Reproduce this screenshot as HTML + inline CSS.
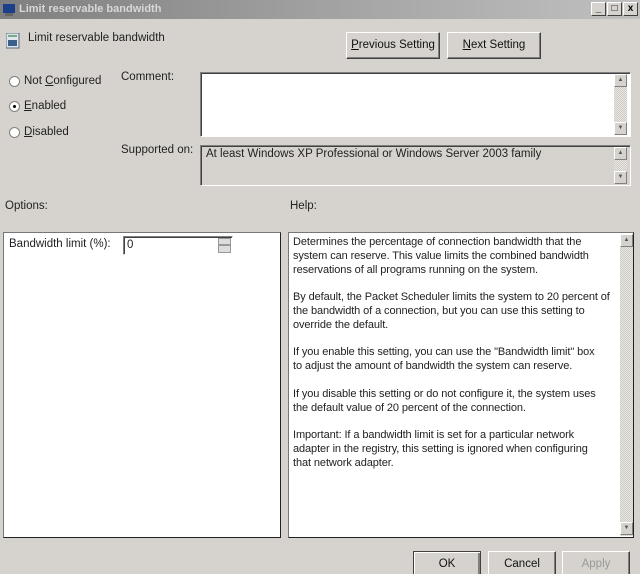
<!DOCTYPE html>
<html><head><meta charset="utf-8"><style>
*{box-sizing:border-box;margin:0;padding:0}
html,body{width:640px;height:574px;overflow:hidden}
body{background:#d6d3ce;font-family:"Liberation Sans",sans-serif;font-size:11px;color:#222;position:relative}
.a{position:absolute}
.title{left:0;top:0;width:640px;height:19px;background:linear-gradient(90deg,#7f7f7f,#a8a8a8 60%,#c0c0c0);}
.title span{position:absolute;left:19px;top:3px;color:#d8d8d8;font-weight:bold;font-size:11px}
.tb{top:2px;width:15px;height:14px;background:#d6d3ce;border:1px solid;border-color:#fff #404040 #404040 #fff;font-size:10px;line-height:11px;text-align:center;font-weight:bold;color:#000}
.btn{background:#d6d3ce;border:1px solid;border-color:#fff #404040 #404040 #fff;box-shadow:inset -1px -1px #808080;text-align:center;font-size:11.5px;line-height:24px;color:#111}
.sunk{border:1px solid;border-color:#808080 #fff #fff #808080;box-shadow:inset 1px 1px #404040}
.panel{border:1px solid #222;border-top-color:#777;border-left-color:#777;background:#fff}
.radio{width:11px;height:11px;border-radius:50%;background:#fff;border:1px solid #808080}
.lbl{font-size:11.5px}
.sb{width:13px;background:repeating-conic-gradient(#e8e6e2 0 25%,#cfccc6 0 50%) 0 0/2px 2px}
.arr{width:13px;height:13px;background:#d6d3ce;border:1px solid;border-color:#fff #808080 #808080 #fff;font-size:6px;line-height:11px;text-align:center;color:#555}
.help p{margin-bottom:13.8px;white-space:nowrap}
</style></head><body>
<div class="a title"><svg class="a" style="left:2px;top:2px" width="15" height="15"><rect x="1" y="2" width="12" height="9" fill="#1c3f8c"/><rect x="3" y="11" width="8" height="3" fill="#666"/></svg><span>Limit reservable bandwidth</span></div>
<div class="a tb" style="left:591px">_</div><div class="a tb" style="left:607px">□</div><div class="a tb" style="left:623px">x</div>

<svg class="a" style="left:6px;top:33px" width="14" height="16"><rect x="0" y="0" width="13" height="15" fill="#dfe6ee" stroke="#567"/><rect x="2" y="7" width="9" height="6" fill="#3a5f8a"/><rect x="2" y="2" width="9" height="2" fill="#7a8"/></svg>
<div class="a lbl" style="left:28px;top:32px">Limit reservable bandwidth</div>
<div class="a btn" style="left:346px;top:32px;width:94px;height:27px"><u>P</u>revious Setting</div>
<div class="a btn" style="left:447px;top:32px;width:94px;height:27px"><u>N</u>ext Setting</div>

<div class="a radio" style="left:9px;top:76px"></div><div class="a lbl" style="left:24px;top:75px">Not <u>C</u>onfigured</div>
<div class="a radio" style="left:9px;top:101px"><div class="a" style="left:3px;top:3px;width:3px;height:3px;background:#000;border-radius:50%"></div></div><div class="a lbl" style="left:24px;top:100px"><u>E</u>nabled</div>
<div class="a radio" style="left:9px;top:127px"></div><div class="a lbl" style="left:24px;top:126px"><u>D</u>isabled</div>

<div class="a lbl" style="left:121px;top:71px">Comment:</div>
<div class="a sunk" style="left:200px;top:72px;width:431px;height:65px;background:#fff"></div>
<div class="a sb" style="left:614px;top:74px;height:61px"></div>
<div class="a arr" style="left:614px;top:74px">▲</div><div class="a arr" style="left:614px;top:122px">▼</div>

<div class="a lbl" style="left:121px;top:144px">Supported on:</div>
<div class="a sunk" style="left:200px;top:145px;width:431px;height:41px"></div>
<div class="a lbl" style="left:206px;top:148px">At least Windows XP Professional or Windows Server 2003 family</div>
<div class="a sb" style="left:614px;top:147px;height:37px"></div>
<div class="a arr" style="left:614px;top:147px">▲</div><div class="a arr" style="left:614px;top:171px">▼</div>

<div class="a lbl" style="left:5px;top:200px">Options:</div>
<div class="a lbl" style="left:290px;top:200px">Help:</div>

<div class="a panel" style="left:3px;top:232px;width:278px;height:306px"></div>
<div class="a lbl" style="left:9px;top:238px">Bandwidth limit (%):</div>
<div class="a sunk" style="left:123px;top:236px;width:110px;height:19px;background:#fff"></div>
<div class="a lbl" style="left:127px;top:239px">0</div>
<div class="a" style="left:218px;top:238px;width:13px;height:7px;border:1px solid #999;background:#ddd"></div>
<div class="a" style="left:218px;top:245px;width:13px;height:8px;border:1px solid #999;background:#ddd"></div>

<div class="a panel" style="left:288px;top:232px;width:346px;height:306px"></div>
<div class="a sb" style="left:620px;top:234px;height:302px"></div>
<div class="a arr" style="left:620px;top:234px">▲</div>
<div class="a arr" style="left:620px;top:522px">▼</div>
<div class="a help" style="left:293px;top:236px;font-size:11px;line-height:13.8px;color:#222;letter-spacing:-0.1px">
<p>Determines the percentage of connection bandwidth that the<br>system can reserve. This value limits the combined bandwidth<br>reservations of all programs running on the system.</p>
<p>By default, the Packet Scheduler limits the system to 20 percent of<br>the bandwidth of a connection, but you can use this setting to<br>override the default.</p>
<p>If you enable this setting, you can use the "Bandwidth limit" box<br>to adjust the amount of bandwidth the system can reserve.</p>
<p>If you disable this setting or do not configure it, the system uses<br>the default value of 20 percent of the connection.</p>
<p>Important: If a bandwidth limit is set for a particular network<br>adapter in the registry, this setting is ignored when configuring<br>that network adapter.</p>
</div>

<div class="a btn" style="left:413px;top:551px;width:68px;height:30px;border-color:#404040;box-shadow:inset 1px 1px #fff,inset -2px -2px #808080">OK</div>
<div class="a btn" style="left:488px;top:551px;width:68px;height:30px">Cancel</div>
<div class="a btn" style="left:562px;top:551px;width:68px;height:30px;color:#999">Apply</div>
</body></html>
